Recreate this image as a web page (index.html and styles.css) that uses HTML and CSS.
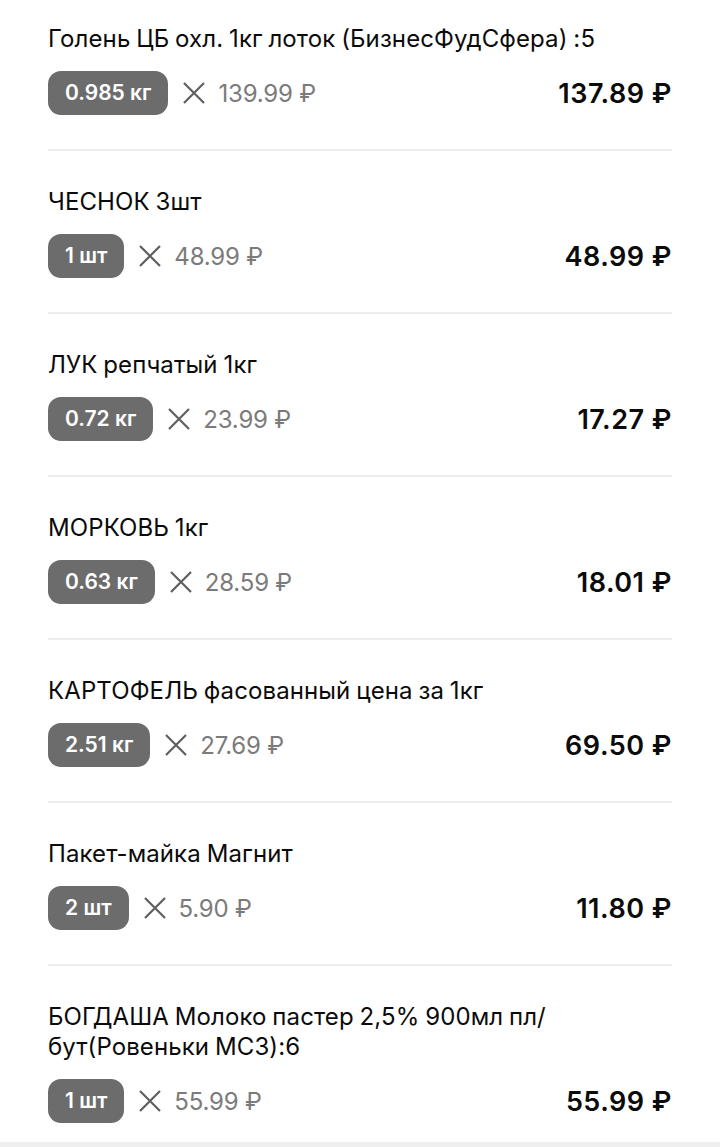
FILE: index.html
```html
<!DOCTYPE html>
<html lang="ru">
<head>
<meta charset="utf-8">
<link rel="stylesheet" href="styles.css">
</head>
<body>
<div class="list">
  <div class="item">
    <div class="title">Голень ЦБ охл. 1кг лоток (БизнесФудСфера) :5</div>
    <div class="row">
      <span class="qty">0.985 кг</span>
      <svg class="times" viewBox="0 0 24 24"><path d="M2 2L22 22M22 2L2 22"/></svg>
      <span class="price">139.99 ₽</span>
      <span class="sum">137.89 ₽</span>
    </div>
  </div>
  <div class="item">
    <div class="title">ЧЕСНОК 3шт</div>
    <div class="row">
      <span class="qty">1 шт</span>
      <svg class="times" viewBox="0 0 24 24"><path d="M2 2L22 22M22 2L2 22"/></svg>
      <span class="price">48.99 ₽</span>
      <span class="sum">48.99 ₽</span>
    </div>
  </div>
  <div class="item">
    <div class="title">ЛУК репчатый 1кг</div>
    <div class="row">
      <span class="qty">0.72 кг</span>
      <svg class="times" viewBox="0 0 24 24"><path d="M2 2L22 22M22 2L2 22"/></svg>
      <span class="price">23.99 ₽</span>
      <span class="sum">17.27 ₽</span>
    </div>
  </div>
  <div class="item">
    <div class="title">МОРКОВЬ 1кг</div>
    <div class="row">
      <span class="qty">0.63 кг</span>
      <svg class="times" viewBox="0 0 24 24"><path d="M2 2L22 22M22 2L2 22"/></svg>
      <span class="price">28.59 ₽</span>
      <span class="sum">18.01 ₽</span>
    </div>
  </div>
  <div class="item">
    <div class="title">КАРТОФЕЛЬ фасованный цена за 1кг</div>
    <div class="row">
      <span class="qty">2.51 кг</span>
      <svg class="times" viewBox="0 0 24 24"><path d="M2 2L22 22M22 2L2 22"/></svg>
      <span class="price">27.69 ₽</span>
      <span class="sum">69.50 ₽</span>
    </div>
  </div>
  <div class="item">
    <div class="title">Пакет-майка Магнит</div>
    <div class="row">
      <span class="qty">2 шт</span>
      <svg class="times" viewBox="0 0 24 24"><path d="M2 2L22 22M22 2L2 22"/></svg>
      <span class="price">5.90 ₽</span>
      <span class="sum">11.80 ₽</span>
    </div>
  </div>
  <div class="item last">
    <div class="title">БОГДАША Молоко пастер 2,5% 900мл пл/<wbr>бут(Ровеньки МСЗ):6</div>
    <div class="row">
      <span class="qty">1 шт</span>
      <svg class="times" viewBox="0 0 24 24"><path d="M2 2L22 22M22 2L2 22"/></svg>
      <span class="price">55.99 ₽</span>
      <span class="sum">55.99 ₽</span>
    </div>
  </div>
</div>
<div class="footer"></div>
</body>
</html>
```

FILE: styles.css
```css
html, body {
  margin: 0;
  padding: 0;
  background: #ffffff;
  font-family: Inter, "Noto Sans", sans-serif;
  color: #0b0b0b;
  overflow: hidden;
}

.list {
  margin-top: -12px;
  padding: 0 48px;
}

.item {
  padding: 36px 0 34px;
  border-bottom: 2px solid #ededed;
  display: flex;
  flex-direction: column;
  gap: 17px;
}

.item.last {
  border-bottom: none;
  padding-bottom: 19px;
}

.title {
  font-size: 24px;
  line-height: 30px;
  font-weight: 400;
  letter-spacing: 0.1px;
  word-spacing: -1px;
}

.row {
  display: flex;
  align-items: center;
  height: 44px;
}

.qty {
  background: #6c6c6c;
  color: #ffffff;
  font-size: 21px;
  font-weight: 600;
  height: 44px;
  line-height: 44px;
  padding: 0 17px;
  border-radius: 13px;
  box-sizing: border-box;
}

.times {
  width: 24px;
  height: 24px;
  margin-left: 14px;
  margin-right: 12px;
  fill: none;
  stroke: #5f5f5f;
  stroke-width: 2.2;
}

.price {
  font-size: 24px;
  color: #7b7b7b;
  letter-spacing: -0.2px;
}

.sum {
  margin-left: auto;
  font-size: 27px;
  font-weight: 600;
  letter-spacing: 0.5px;
  color: #0b0b0b;
}

.footer {
  height: 40px;
  background: #efefef;
}
```
